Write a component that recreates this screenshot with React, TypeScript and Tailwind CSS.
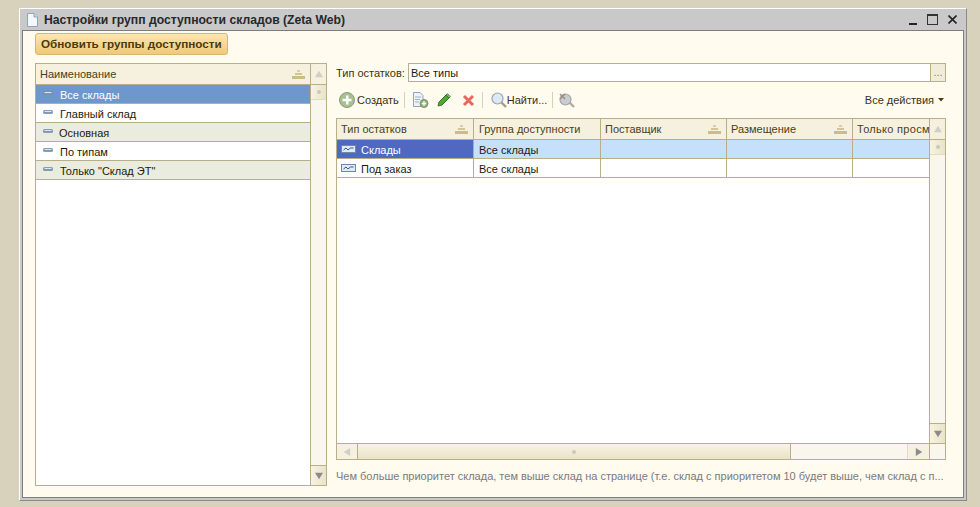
const F = "font-['Liberation_Sans',Arial,sans-serif]";

const SortMark = () => (
  <svg width="13" height="9" viewBox="0 0 13 9" className="shrink-0">
    <rect x="5" y="0" width="3" height="2" fill="#d8cfa6" />
    <rect x="3" y="3" width="7" height="2" fill="#cfc595" />
    <rect x="0" y="6" width="13" height="3" fill="#c9bd88" />
  </svg>
);

const Dash = () => (
  <svg width="10" height="4" viewBox="0 0 10 4" className="shrink-0 -mt-[2px]">
    <rect x="0.25" y="0.25" width="9.5" height="3.5" rx="1.5" fill="#8097b5" stroke="#6b82a0" strokeWidth="0.5" />
    <rect x="1.5" y="1" width="7" height="1" fill="#dbe5f1" />
  </svg>
);

const RowIcon = () => (
  <svg width="15" height="8" viewBox="0 0 15 8" className="shrink-0">
    <rect x="0.5" y="0.5" width="14" height="7" fill="#dfe9f7" stroke="#6f87a8" />
    <path d="M2.5 5 L5 3 L7 5 L9.5 3 L12.5 3" fill="none" stroke="#3f5878" />
  </svg>
);

const Arrow = ({ dir, dark }: { dir: 'up' | 'down' | 'left' | 'right'; dark?: boolean }) => {
  const d = {
    up: 'M5 1 L10 9 L0 9 Z',
    down: 'M0 1 L10 1 L5 9 Z',
    left: 'M1 5 L9 0 L9 10 Z',
    right: 'M9 5 L1 0 L1 10 Z',
  }[dir];
  return (
    <svg width="8" height="8" viewBox="0 0 10 10">
      <path d={d} fill={dark ? '#8b8b8b' : '#cfcfc8'} />
    </svg>
  );
};

const Thumb = () => <span className="block w-[4px] h-[4px] rounded-full bg-[#c9c9bb]" />;

const Sep = ({ className = 'mx-[5px]' }: { className?: string }) => <div className={`w-px h-[16px] bg-[#d5d0b8] ${className}`} />;

const listRows = [
  { name: 'Все склады', bg: 'bg-[#6e98cd] text-white', pl: 'pl-[7px]' },
  { name: 'Главный склад', bg: 'bg-white', pl: 'pl-[7px]' },
  { name: 'Основная', bg: 'bg-[#e9ecdf]', pl: 'pl-[6px]' },
  { name: 'По типам', bg: 'bg-white', pl: 'pl-[7px]' },
  { name: 'Только "Склад ЭТ"', bg: 'bg-[#e9ecdf]', pl: 'pl-[7px]' },
];

const colClass = ['w-[137px] pl-[4px]', 'w-[127px] pl-[5px]', 'w-[126px] pl-[4px]', 'w-[126px] pl-[4px]', 'flex-1 pl-[4px]'];
const headers = ['Тип остатков', 'Группа доступности', 'Поставщик', 'Размещение', 'Только просм'];

const VScrollbar = ({ className }: { className: string }) => (
  <div className={`flex flex-col bg-[#f8f6ed] ${className}`}>
    <div className="h-[21px] flex items-center justify-center border-b border-[#b8ae87] bg-[#f5f1de]">
      <Arrow dir="up" />
    </div>
    <div className="h-[15px] flex items-center justify-center border-b border-[#e0dbc2] bg-gradient-to-r from-[#f7f3e1] to-[#e9e3c8]">
      <Thumb />
    </div>
    <div className="flex-1" />
    <div className="h-[20px] flex items-center justify-center border-t border-[#b8ae87] bg-gradient-to-r from-[#f7f3e1] to-[#e9e3c8]">
      <Arrow dir="down" dark />
    </div>
  </div>
);

export default function App() {
  return (
    <div className={`${F} w-[980px] h-[507px] overflow-hidden bg-[#d8d2bc] pt-[8px] pl-[19px] text-[11px] leading-none text-[#1f1a08]`}>
      {/* window */}
      <div className="w-[948px] h-[493px] flex flex-col bg-[#c9c9c9] border-t border-l border-t-white border-l-white border-r border-b border-r-[#8a8a8a] border-b-[#8a8a8a] pl-[2px] pr-[2px] pb-[2px]">
        {/* title */}
        <div className="h-[21px] flex items-center shrink-0 pl-[5px]">
          <svg width="11" height="14" viewBox="0 0 11 14" className="shrink-0">
            <path d="M0.5 0.5 H7 L10.5 4 V13.5 H0.5 Z" fill="#f4f8fd" stroke="#8da3bf" />
            <path d="M7 0.5 V4 H10.5" fill="#cfdcec" stroke="#8da3bf" />
          </svg>
          <span className="ml-[6px] pt-[2px] font-bold text-[12.2px] text-[#26282c]">Настройки групп доступности складов (Zeta Web)</span>
          <div className="ml-auto flex items-center gap-[11px] pr-[7px]">
            <div className="w-[8px] h-[2px] bg-[#222] mt-[8px] mr-[-1px]" />
            <div className="w-[11px] h-[11px] border border-[#333] border-t-2 mr-[-1px]" />
            <svg width="9" height="9" viewBox="0 0 9 9"><path d="M0.5 0.5 L8.5 8.5 M8.5 0.5 L0.5 8.5" stroke="#222" strokeWidth="1.6" /></svg>
          </div>
        </div>

        {/* content */}
        <div className="flex-1 flex flex-col bg-[#fffbef] border-t border-l border-r border-b border-[#7e7e7e] pl-[12px] pr-[16px]">
          <button className="self-start h-[22px] mt-[2px] px-[5px] rounded-[3px] border border-[#dab66c] bg-gradient-to-b from-[#fbe6b4] to-[#f0c878] font-bold text-[11.7px] text-[#4c3a0c]">
            Обновить группы доступности
          </button>

          <div className="flex mt-[8px] gap-[9px]">
            {/* left list */}
            <div className="w-[292px] h-[423px] flex border border-[#b8ae87] shrink-0">
              <div className="flex-1 flex flex-col bg-white">
                <div className="h-[21px] flex items-center justify-between pl-[4px] pr-[5px] bg-[#f5f1de] border-b border-[#b8ae87]">
                  <span className="text-[#4a3f17]">Наименование</span>
                  <SortMark />
                </div>
                {listRows.map((r) => (
                  <div key={r.name} className={`h-[19px] flex items-center border-b border-[#b8ae87] pl-[7px] ${r.bg}`}>
                    <Dash />
                    <span className={`${r.pl} pt-[2px]`}>{r.name}</span>
                  </div>
                ))}
              </div>
              <VScrollbar className="w-[16px] border-l border-[#b8ae87]" />
            </div>

            {/* right side */}
            <div className="w-[610px] flex flex-col">
              <div className="flex items-center h-[19px]">
                <span className="w-[72px] shrink-0 pt-[1px] text-[#3b3212]">Тип остатков:</span>
                <div className="flex-1 flex h-[19px] border border-[#b8ae87] bg-white">
                  <span className="flex-1 pl-[2px] pt-[1px] self-center">Все типы</span>
                  <div className="w-[15px] flex items-end justify-center pb-[3px] border-l border-[#b8ae87] bg-[#f0ecd9] text-[#8a8266] text-[11px]">...</div>
                </div>
              </div>

              {/* toolbar */}
              <div className="flex items-center h-[20px] mt-[8px] pl-[3px] text-[#3b3212]">
                <svg width="16" height="16" viewBox="0 0 16 16" className="shrink-0">
                  <circle cx="8" cy="8" r="7.5" fill="#a7c08f" stroke="#8c9a84" />
                  <rect x="7" y="3.5" width="2.5" height="9" fill="#fff" />
                  <rect x="3.5" y="6.8" width="9" height="2.5" fill="#fff" />
                </svg>
                <span className="ml-[2px]">Создать</span>
                <Sep className="ml-[5px] mr-[5px]" />
                <svg width="17" height="16" viewBox="0 0 17 16" className="shrink-0 ml-[2px]">
                  <path d="M1.5 0.5 H8 L11 3.5 V14.5 H1.5 Z" fill="#eef3fa" stroke="#8ea3bf" />
                  <path d="M3 5 H9 M3 7.5 H8 M3 10 H7" stroke="#9db1ca" />
                  <circle cx="12" cy="11.5" r="4" fill="#8fb27c" stroke="#7d9270" />
                  <path d="M12 9.3 V13.7 M9.8 11.5 H14.2" stroke="#fff" strokeWidth="1.4" />
                </svg>
                <svg width="14" height="14" viewBox="0 0 14 14" className="shrink-0 ml-[8px]">
                  <path d="M1 13 L2 9 L9 2 L12 5 L5 12 Z" fill="#52a63a" stroke="#2f7d22" />
                  <path d="M9 2 L10.5 0.8 L13.2 3.6 L12 5 Z" fill="#7ccc62" stroke="#2f7d22" />
                </svg>
                <svg width="13" height="13" viewBox="0 0 13 13" className="shrink-0 ml-[11px]">
                  <path d="M2 2 L11 11 M11 2 L2 11" stroke="#e8685c" strokeWidth="3" />
                </svg>
                <Sep className="ml-[7px] mr-[5px]" />
                <svg width="16" height="16" viewBox="0 0 16 16" className="shrink-0 ml-[3px]">
                  <path d="M10 10 L15 15" stroke="#b09a80" strokeWidth="2.4" />
                  <circle cx="6.5" cy="6.5" r="5.5" fill="#dbe8f6" stroke="#9aa4ae" strokeWidth="1.2" />
                </svg>
                <span>Найти...</span>
                <Sep className="ml-[5px] mr-[5px]" />
                <svg width="17" height="16" viewBox="0 0 17 16" className="shrink-0">
                  <path d="M11 10 L16 15" stroke="#b3aaa0" strokeWidth="2.4" />
                  <circle cx="7.5" cy="7.5" r="5.5" fill="#c9ccd0" stroke="#a5a5a5" strokeWidth="1.2" />
                  <path d="M2 2 L7 7 M7 2 L2 7" stroke="#9a9088" strokeWidth="1.6" />
                </svg>
                <span className="ml-auto text-[#3b3212]">Все действия</span>
                <svg width="6" height="4" viewBox="0 0 6 4" className="ml-[4px] mr-[2px]"><path d="M0 0 H6 L3 3.5 Z" fill="#4a3f17" /></svg>
              </div>

              {/* table */}
              <div className="h-[342px] mt-[8px] flex flex-col border border-[#b8ae87] bg-white">
                <div className="flex-1 flex min-h-0">
                  <div className="flex-1 flex flex-col min-w-0">
                    <div className="h-[21px] flex bg-[#f5f1de] border-b border-[#b8ae87] text-[#4a3f17]">
                      {headers.map((h, i) => (
                        <div key={h} className={`${colClass[i]} flex items-center justify-between pr-[5px] overflow-hidden whitespace-nowrap ${i < 4 ? 'border-r border-[#b8ae87]' : 'tracking-[0.3px]'}`}>
                          <span>{h}</span>
                          {i !== 1 && i !== 4 && <SortMark />}
                        </div>
                      ))}
                    </div>
                    <div className="h-[19px] flex border-b border-[#b8ae87] bg-[#c6e0fb]">
                      <div className="w-[137px] flex items-center pl-[4px] bg-[#5068c0] text-white border-r border-[#b8ae87]">
                        <RowIcon />
                        <span className="ml-[5px] pt-[2px]">Склады</span>
                      </div>
                      <div className="w-[127px] flex items-center pl-[5px] pt-[2px] border-r border-[#b8ae87]">Все склады</div>
                      <div className="w-[126px] border-r border-[#b8ae87]" />
                      <div className="w-[126px] border-r border-[#b8ae87]" />
                      <div className="flex-1" />
                    </div>
                    <div className="h-[19px] flex border-b border-[#b8ae87]">
                      <div className="w-[137px] flex items-center pl-[4px] border-r border-[#b8ae87]">
                        <RowIcon />
                        <span className="ml-[5px] pt-[2px]">Под заказ</span>
                      </div>
                      <div className="w-[127px] flex items-center pl-[5px] pt-[2px] border-r border-[#b8ae87]">Все склады</div>
                      <div className="w-[126px] border-r border-[#b8ae87]" />
                      <div className="w-[126px] border-r border-[#b8ae87]" />
                      <div className="flex-1" />
                    </div>
                  </div>
                  <VScrollbar className="w-[16px] border-l border-[#b8ae87]" />
                </div>
                {/* horizontal scrollbar */}
                <div className="h-[16px] flex border-t border-[#b8ae87] bg-[#f8f6ed]">
                  <div className="w-[21px] flex items-center justify-center border-r border-[#b8ae87] bg-[#f5f1de]"><Arrow dir="left" /></div>
                  <div className="w-[433px] flex items-center justify-center bg-gradient-to-b from-[#f7f3e1] to-[#e9e3c8] border-r border-[#b8ae87]"><Thumb /></div>
                  <div className="flex-1" />
                  <div className="w-[22px] flex items-center justify-center border-l border-[#e0dbc2] bg-[#f5f1de]"><Arrow dir="right" dark /></div>
                  <div className="w-[16px] border-l border-[#b8ae87]" />
                </div>
              </div>

              <div className="mt-[11px] text-[#7a7a80] whitespace-nowrap">
                Чем больше приоритет склада, тем выше склад на странице (т.е. склад с приоритетом 10 будет выше, чем склад с п...
              </div>
            </div>
          </div>
        </div>
      </div>
    </div>
  );
}
